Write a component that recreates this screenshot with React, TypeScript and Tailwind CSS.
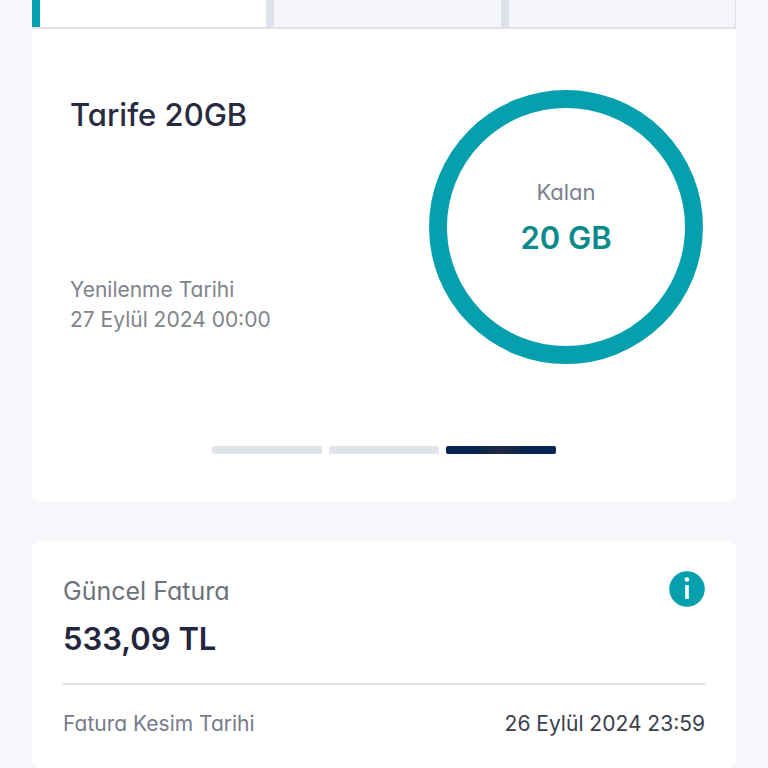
import React, { useState } from 'react';
import clsx from 'clsx';

const tabs = ['İnternet', 'Dakika', 'SMS'];
const slides = [1, 2, 3];

interface UsageRingProps {
  label: string;
  value: string;
}

const UsageRing: React.FC<UsageRingProps> = ({ label, value }) => {
  return (
    <div className="flex h-[274px] w-[274px] shrink-0 flex-col items-center justify-center gap-[10px] rounded-full border-[18px] border-[#069fae] pb-5">
      <span className="text-[22px] leading-8 text-[#7b7f8e]">{label}</span>
      <span className="text-[31px] leading-10 font-semibold text-[#0b8a8d]">{value}</span>
    </div>
  );
};

const InfoIcon = () => (
  <svg viewBox="0 0 36 36" className="h-9 w-9" aria-hidden="true">
    <circle cx="18" cy="18" r="17.8" fill="#069fae" />
    <circle cx="18" cy="8.5" r="2.3" fill="#fff" />
    <rect x="16.2" y="14" width="3.6" height="14" rx="0.6" fill="#fff" />
  </svg>
);

const App: React.FC = () => {
  const [activeTab, setActiveTab] = useState(0);
  const [activeSlide, setActiveSlide] = useState(2);

  return (
    <main className="min-h-screen overflow-hidden bg-[#f5f7fa] px-8 font-['Inter','Liberation_Sans',sans-serif] [font-feature-settings:'cv11']">
      {/* Tariff usage */}
      <section className="rounded-b-lg bg-white">
        <div className="flex h-[29px] border-r border-b-2 border-[#e0e2e9]">
          {tabs.map((tab, index) => (
            <button
              key={tab}
              type="button"
              aria-label={tab}
              aria-pressed={activeTab === index}
              onClick={() => setActiveTab(index)}
              className={clsx(
                'flex-1 border-l-8',
                activeTab === index ? 'border-[#069fae] bg-white' : 'border-[#dfe2ea] bg-[#f4f6fb]'
              )}
            />
          ))}
        </div>

        <div className="flex justify-between pt-[61px] pr-[33px] pl-[38px]">
          <div className="flex flex-col justify-between pt-[5px] pb-[29px]">
            <h1 className="text-[31px] leading-10 font-medium text-[#272a40]">Tarife 20GB</h1>
            <p className="text-[21px] leading-[30px] text-[#80848c]">
              Yenilenme Tarihi
              <br />
              27 Eylül 2024 00:00
            </p>
          </div>
          <UsageRing label="Kalan" value="20 GB" />
        </div>

        {/* Slide indicators */}
        <div className="flex justify-center gap-[7px] pt-[82px] pb-[47px]">
          {slides.map((slide, index) => (
            <button
              key={slide}
              type="button"
              aria-label={`${slide}. tarife`}
              onClick={() => setActiveSlide(index)}
              className={clsx(
                'h-2 w-[110px] rounded-xs',
                activeSlide === index
                  ? 'bg-linear-to-r from-[#03254f] from-25% via-[#202945] via-50% to-[#03254f] to-75%'
                  : 'bg-[#e0e3e9]'
              )}
            />
          ))}
        </div>
      </section>

      {/* Current bill */}
      <section className="mt-10 rounded-lg bg-white px-[31px] pt-[30px] pb-7">
        <div className="flex items-start justify-between">
          <div>
            <h2 className="text-[25px] leading-10 text-[#6d717b]">Güncel Fatura</h2>
            <p className="mt-2 text-[31px] leading-10 font-semibold text-[#23263e]">533,09 TL</p>
          </div>
          <button type="button" aria-label="Fatura bilgisi">
            <InfoIcon />
          </button>
        </div>
        <dl className="mt-6 flex items-center justify-between border-t-2 border-[#e0e2e7] pt-[23px] text-[21px] leading-8">
          <dt className="text-[#777b8b]">Fatura Kesim Tarihi</dt>
          <dd className="text-[#3a3e4d]">26 Eylül 2024 23:59</dd>
        </dl>
      </section>
    </main>
  );
};

export default App;
